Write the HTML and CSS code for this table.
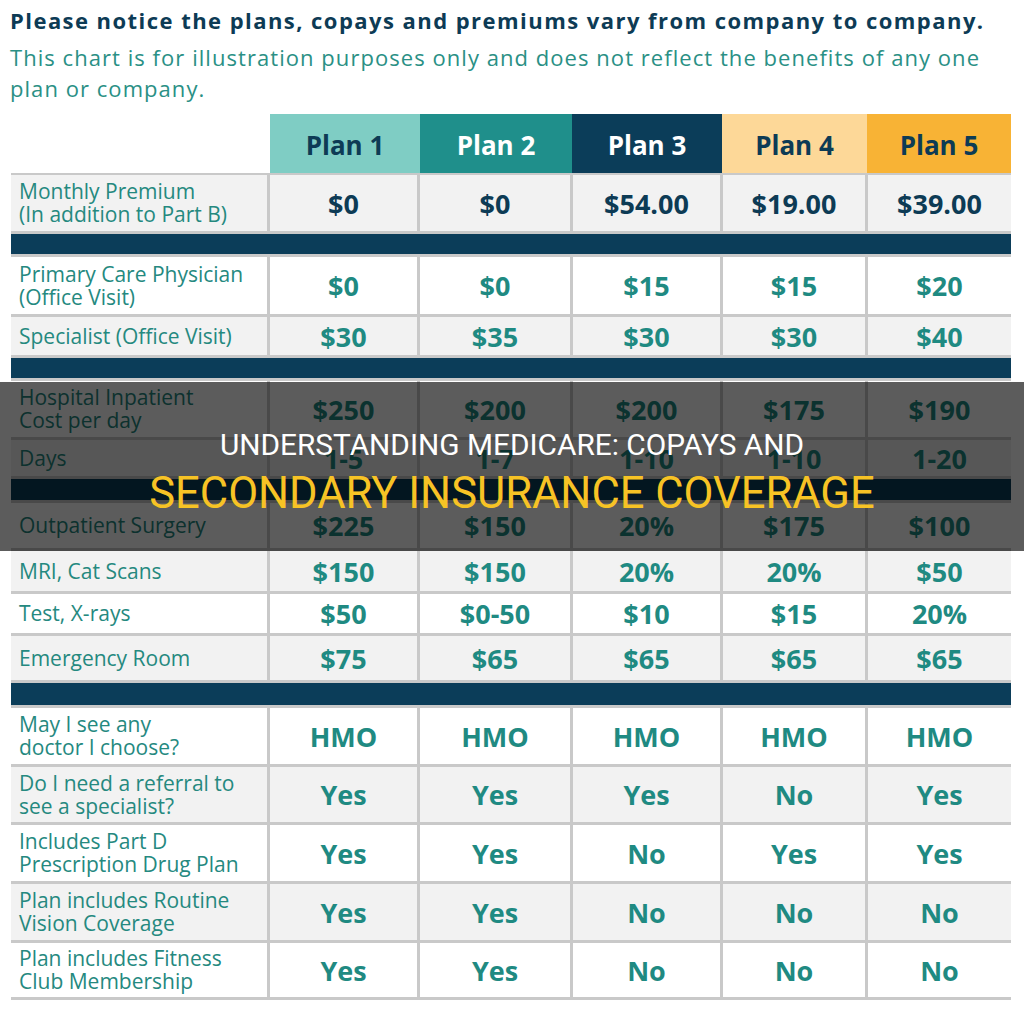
FILE: index.html
```html
<!DOCTYPE html>
<html lang="en">
<head>
<meta charset="utf-8">
<title>Understanding Medicare: Copays and Secondary Insurance Coverage</title>
<link rel="stylesheet" href="styles.css">
</head>
<body>
<div class="page">
  <div class="intro">
    <p class="notice">Please notice the plans, copays and premiums vary from company to company.</p>
    <p class="disclaimer">This chart is for illustration purposes only and does not reflect the benefits of any one<br>plan or company.</p>
  </div>

  <div class="chart">
    <div class="head-row">
      <div class="head-blank"></div>
      <div class="plan plan-1">Plan 1</div>
      <div class="plan plan-2">Plan 2</div>
      <div class="plan plan-3">Plan 3</div>
      <div class="plan plan-4">Plan 4</div>
      <div class="plan plan-5">Plan 5</div>
    </div>

    <div class="grid">
      <div class="row alt navy">
        <div class="label">Monthly Premium<br>(In addition to Part B)</div>
        <div class="val">$0</div><div class="val">$0</div><div class="val">$54.00</div><div class="val">$19.00</div><div class="val">$39.00</div>
      </div>
      <div class="band"></div>
      <div class="row">
        <div class="label">Primary Care Physician<br>(Office Visit)</div>
        <div class="val">$0</div><div class="val">$0</div><div class="val">$15</div><div class="val">$15</div><div class="val">$20</div>
      </div>
      <div class="row alt">
        <div class="label">Specialist (Office Visit)</div>
        <div class="val">$30</div><div class="val">$35</div><div class="val">$30</div><div class="val">$30</div><div class="val">$40</div>
      </div>
      <div class="band"></div>
      <div class="row">
        <div class="label">Hospital Inpatient<br>Cost per day</div>
        <div class="val">$250</div><div class="val">$200</div><div class="val">$200</div><div class="val">$175</div><div class="val">$190</div>
      </div>
      <div class="row alt">
        <div class="label">Days</div>
        <div class="val">1-5</div><div class="val">1-7</div><div class="val">1-10</div><div class="val">1-10</div><div class="val">1-20</div>
      </div>
      <div class="band"></div>
      <div class="row">
        <div class="label">Outpatient Surgery</div>
        <div class="val">$225</div><div class="val">$150</div><div class="val">20%</div><div class="val">$175</div><div class="val">$100</div>
      </div>
      <div class="row alt">
        <div class="label">MRI, Cat Scans</div>
        <div class="val">$150</div><div class="val">$150</div><div class="val">20%</div><div class="val">20%</div><div class="val">$50</div>
      </div>
      <div class="row">
        <div class="label">Test, X-rays</div>
        <div class="val">$50</div><div class="val">$0-50</div><div class="val">$10</div><div class="val">$15</div><div class="val">20%</div>
      </div>
      <div class="row alt">
        <div class="label">Emergency Room</div>
        <div class="val">$75</div><div class="val">$65</div><div class="val">$65</div><div class="val">$65</div><div class="val">$65</div>
      </div>
      <div class="band"></div>
      <div class="row">
        <div class="label">May I see any<br>doctor I choose?</div>
        <div class="val">HMO</div><div class="val">HMO</div><div class="val">HMO</div><div class="val">HMO</div><div class="val">HMO</div>
      </div>
      <div class="row alt">
        <div class="label">Do I need a referral to<br>see a specialist?</div>
        <div class="val">Yes</div><div class="val">Yes</div><div class="val">Yes</div><div class="val">No</div><div class="val">Yes</div>
      </div>
      <div class="row">
        <div class="label">Includes Part D<br>Prescription Drug Plan</div>
        <div class="val">Yes</div><div class="val">Yes</div><div class="val">No</div><div class="val">Yes</div><div class="val">Yes</div>
      </div>
      <div class="row alt">
        <div class="label">Plan includes Routine<br>Vision Coverage</div>
        <div class="val">Yes</div><div class="val">Yes</div><div class="val">No</div><div class="val">No</div><div class="val">No</div>
      </div>
      <div class="row">
        <div class="label">Plan includes Fitness<br>Club Membership</div>
        <div class="val">Yes</div><div class="val">Yes</div><div class="val">No</div><div class="val">No</div><div class="val">No</div>
      </div>
    </div>
  </div>

  <div class="overlay">
    <h1 class="title">
      <span class="title-1">UNDERSTANDING MEDICARE: COPAYS AND</span>
      <span class="title-2">SECONDARY INSURANCE COVERAGE</span>
    </h1>
  </div>
</div>
</body>
</html>
```

FILE: styles.css
```css
* { box-sizing: border-box; }

html, body {
  margin: 0;
  padding: 0;
  background: #ffffff;
}

.page {
  position: relative;
  width: 1024px;
  height: 1011px;
  overflow: hidden;
  font-family: "Open Sans", "Noto Sans", sans-serif;
}

.intro {
  padding: 6px 10px 0 10px;
}

.notice {
  margin: 0;
  font-size: 22px;
  line-height: 28px;
  font-weight: 700;
  color: #0d3b55;
  letter-spacing: 1.45px;
  white-space: nowrap;
}

.disclaimer {
  margin: 8px 0 0 0;
  font-size: 22px;
  line-height: 31px;
  font-weight: 400;
  color: #2a9085;
  letter-spacing: 1.05px;
  white-space: nowrap;
}

.chart {
  margin: 10px 0 0 11px;
  width: 1000px;
}

.head-row {
  display: grid;
  grid-template-columns: 259px 150px 152px 150px 145px 144px;
  height: 59px;
}

.plan {
  display: flex;
  align-items: center;
  justify-content: center;
  font-size: 26px;
  font-weight: 700;
  color: #0d3b55;
  padding-top: 3px;
}

.plan-1 { background: #7fcdc4; }
.plan-2 { background: #1f8f8b; color: #ffffff; }
.plan-3 { background: #0b3d59; color: #ffffff; }
.plan-4 { background: #fdd898; }
.plan-5 { background: #f8b335; }

.grid {
  display: grid;
  grid-template-columns: 256px 147px 150px 147px 142px 143px;
  grid-template-rows: 56px 20px 57px 38px 20px 56px 36px 21px 45px 40px 39px 44px 22px 56px 55px 56px 56px 54px;
  gap: 3px;
  padding: 2px 3px 3px 0;
  background: #c9c9c9;
}

.row { display: contents; }

.row > div { background: #ffffff; }
.row.alt > div { background: #f2f2f2; }

.label {
  display: flex;
  align-items: center;
  padding-left: 8px;
  font-size: 21px;
  line-height: 23px;
  color: #25897f;
}

.val {
  display: flex;
  align-items: center;
  justify-content: center;
  font-size: 27px;
  font-weight: 700;
  color: #1f8a82;
}

.row.navy .val { color: #0d3b55; }

.band {
  grid-column: 1 / -1;
  background: #0b3d59;
}

.overlay {
  position: absolute;
  left: 0;
  top: 382px;
  width: 1024px;
  height: 169px;
  padding-top: 4px;
  background: rgba(0, 0, 0, 0.64);
  display: flex;
  align-items: center;
  justify-content: center;
}

.title {
  margin: 0;
  display: flex;
  flex-direction: column;
  align-items: center;
  font-family: Roboto, "Liberation Sans", sans-serif;
  font-weight: 400;
  text-align: center;
  white-space: nowrap;
}

.title-1 {
  font-size: 29.8px;
  line-height: 49px;
  color: #ffffff;
}

.title-2 {
  font-size: 43.5px;
  line-height: 49px;
  color: #f7c325;
}
```
